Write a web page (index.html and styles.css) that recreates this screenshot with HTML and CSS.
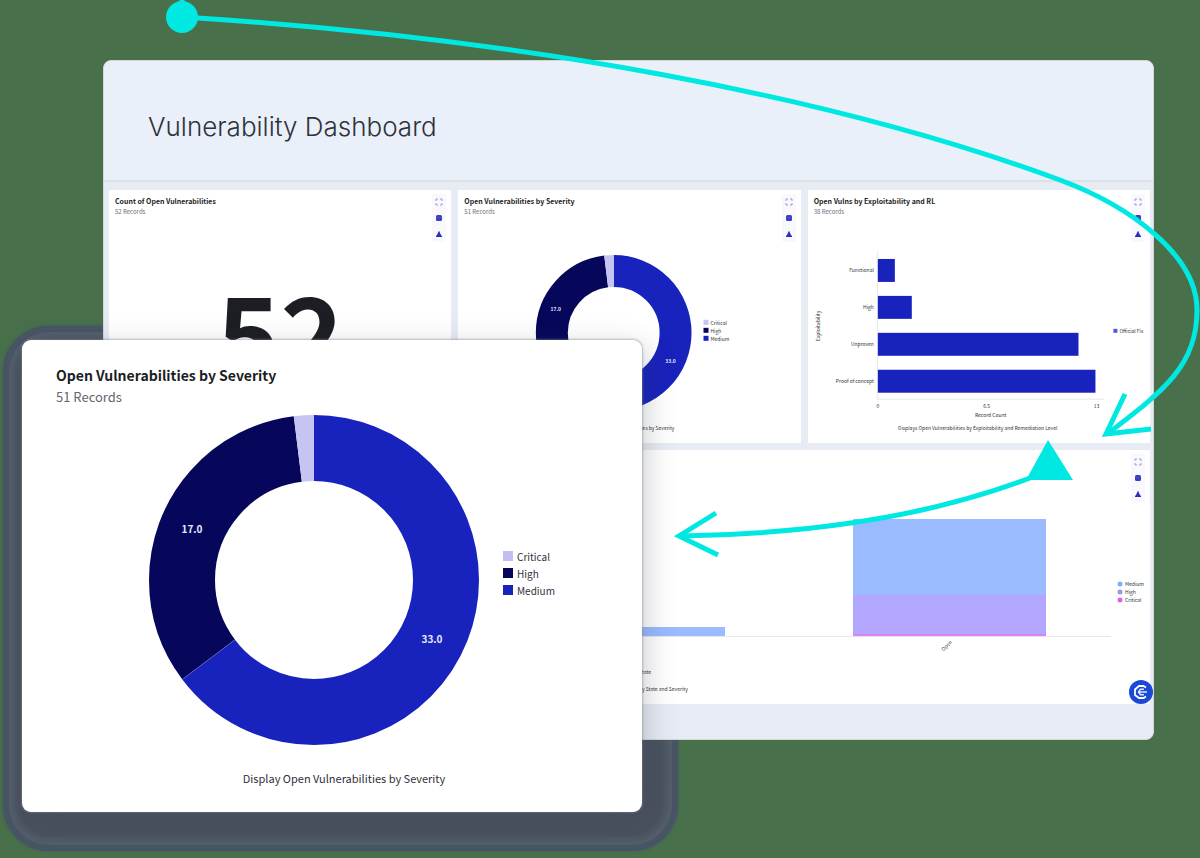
FILE: index.html
```html
<!DOCTYPE html>
<html lang="en">
<head>
    <meta charset="UTF-8">
    <meta name="viewport" content="width=device-width, initial-scale=1.0">
    <title>Vulnerability Dashboard</title>
    <link rel="stylesheet" href="styles.css">
</head>
<body>

<!-- Shared icons -->
<svg class="sprite" aria-hidden="true">
    <symbol id="icon-expand" viewBox="0 0 8 8">
        <path d="M1 3V1h2M5 1h2v2M7 5v2H5M3 7H1V5" fill="none" stroke="#9a9bdc" stroke-width="1"/>
    </symbol>
    <symbol id="icon-table" viewBox="0 0 8 8">
        <rect x="1" y="1" width="6" height="6" rx="1.5" fill="#3b3fc0"/>
        <path d="M1 3.3h6" stroke="#5d60cc" stroke-width=".5"/>
    </symbol>
    <symbol id="icon-alert" viewBox="0 0 8 8">
        <path d="M4 .8C5 2.2 5.3 4.6 7 6.2V7H1v-.8C2.700 4.600 3 2.200 4 .8z" fill="#2b2fb8"/>
    </symbol>
</svg>

<main class="scene">
    <div class="halo"></div>

    <!-- Dashboard -->
    <section class="dashboard">
        <header class="dashboard-header">
            <h1>Vulnerability Dashboard</h1>
        </header>

        <div class="cards">
            <article class="card">
                <div class="card-head">
                    <div>
                        <h2>Count of Open Vulnerabilities</h2>
                        <p>52 Records</p>
                    </div>
                    <div class="tools">
                        <button type="button" aria-label="Expand"><svg><use href="#icon-expand"/></svg></button>
                        <button type="button" aria-label="Table"><svg><use href="#icon-table"/></svg></button>
                        <button type="button" aria-label="Alerts"><svg><use href="#icon-alert"/></svg></button>
                    </div>
                </div>
                <div class="count">52</div>
            </article>

            <article class="card">
                <div class="card-head">
                    <div>
                        <h2>Open Vulnerabilities by Severity</h2>
                        <p>51 Records</p>
                    </div>
                    <div class="tools">
                        <button type="button" aria-label="Expand"><svg><use href="#icon-expand"/></svg></button>
                        <button type="button" aria-label="Table"><svg><use href="#icon-table"/></svg></button>
                        <button type="button" aria-label="Alerts"><svg><use href="#icon-alert"/></svg></button>
                    </div>
                </div>
                <svg class="chart" viewBox="0 0 343 201">
                    <g class="donut" transform="rotate(-90 156 91)" stroke-width="32">
                        <circle class="medium" cx="156" cy="91" r="62" pathLength="51" stroke-dasharray="33 18"/>
                        <circle class="high" cx="156" cy="91" r="62" pathLength="51" stroke-dasharray="17 34" stroke-dashoffset="-33"/>
                        <circle class="critical" cx="156" cy="91" r="62" pathLength="51" stroke-dasharray="1 50" stroke-dashoffset="-50"/>
                    </g>
                    <text class="value" x="98" y="69">17.0</text>
                    <text class="value" x="213" y="121">33.0</text>
                    <rect x="246" y="78" width="5" height="5" fill="#c6c4f2"/>
                    <rect x="246" y="86" width="5" height="5" fill="#06075b"/>
                    <rect x="246" y="94" width="5" height="5" fill="#1822bd"/>
                    <text x="253" y="83">Critical</text>
                    <text x="253" y="91">High</text>
                    <text x="253" y="99">Medium</text>
                    <text class="caption" x="171" y="188">Display Open Vulnerabilities by Severity</text>
                </svg>
            </article>

            <article class="card">
                <div class="card-head">
                    <div>
                        <h2>Open Vulns by Exploitability and RL</h2>
                        <p>38 Records</p>
                    </div>
                    <div class="tools">
                        <button type="button" aria-label="Expand"><svg><use href="#icon-expand"/></svg></button>
                        <button type="button" aria-label="Table"><svg><use href="#icon-table"/></svg></button>
                        <button type="button" aria-label="Alerts"><svg><use href="#icon-alert"/></svg></button>
                    </div>
                </div>
                <svg class="chart" viewBox="0 0 343 201">
                    <path class="axis" d="M69.500 10v148M69 157.500h228"/>
                    <g fill="#1822bd">
                        <rect x="70" y="17" width="17" height="23"/>
                        <rect x="70" y="54" width="34" height="23"/>
                        <rect x="70" y="91" width="201" height="23"/>
                        <rect x="70" y="128" width="218" height="23"/>
                    </g>
                    <g text-anchor="end">
                        <text x="66" y="30">Functional</text>
                        <text x="66" y="67">High</text>
                        <text x="66" y="104">Unproven</text>
                        <text x="66" y="141">Proof of concept</text>
                    </g>
                    <g text-anchor="middle">
                        <text x="70" y="166">0</text>
                        <text x="179" y="166">6.5</text>
                        <text x="289" y="166">13</text>
                        <text class="caption" x="183" y="175">Record Count</text>
                        <text class="caption" x="170" y="188">Displays Open Vulnerabilities by Exploitability and Remediation Level</text>
                        <text class="caption" transform="translate(12 84) rotate(-90)">Exploitability</text>
                    </g>
                    <rect x="306" y="87" width="4" height="4" fill="#4a5be0"/>
                    <text x="312" y="91">Official Fix</text>
                </svg>
            </article>

            <article class="card card-wide">
                <div class="card-head">
                    <div>
                        <h2>Vulnerabilities by State and Severity</h2>
                        <p>51 Records</p>
                    </div>
                    <div class="tools">
                        <button type="button" aria-label="Expand"><svg><use href="#icon-expand"/></svg></button>
                        <button type="button" aria-label="Table"><svg><use href="#icon-table"/></svg></button>
                        <button type="button" aria-label="Alerts"><svg><use href="#icon-alert"/></svg></button>
                    </div>
                </div>
                <svg class="chart" viewBox="0 0 1041 202">
                    <path class="axis" d="M70 134.500h932"/>
                    <rect x="423" y="125" width="193" height="9" fill="#9abbff"/>
                    <rect x="744" y="17" width="193" height="76" fill="#9abbff"/>
                    <rect x="744" y="93" width="193" height="39" fill="#b3a6ff"/>
                    <rect x="744" y="132" width="193" height="2" fill="#d884f6"/>
                    <text text-anchor="middle" transform="translate(839 145) rotate(-45)">Open</text>
                    <text class="caption" x="536" y="172">State</text>
                    <text class="caption" x="520" y="189">Displays Open Vulnerabilities by State and Severity</text>
                    <circle cx="1011" cy="82" r="2.500" fill="#7fb0f5"/>
                    <circle cx="1011" cy="90" r="2.500" fill="#9c95f0"/>
                    <circle cx="1011" cy="98" r="2.500" fill="#dc62ea"/>
                    <text x="1016" y="84">Medium</text>
                    <text x="1016" y="92">High</text>
                    <text x="1016" y="100">Critical</text>
                </svg>
            </article>
        </div>

        <button class="badge" type="button" aria-label="Assistant">
            <svg viewBox="0 0 24 24">
                <circle cx="12" cy="12" r="12" fill="#1c48d8"/>
                <path d="M17 7.500 14.500 6H10L6 9.500v5.500L10 18h4.500L17 16.500" fill="none" stroke="#fff" stroke-width="1.800"/>
                <path d="M15 9.200h-3.500L9.500 12l2 2.800H15M10 12h8" fill="none" stroke="#dfe6ff" stroke-width="1.600"/>
            </svg>
        </button>
    </section>

    <!-- Enlarged chart -->
    <section class="detail">
        <h2>Open Vulnerabilities by Severity</h2>
        <p>51 Records</p>
        <svg class="chart" viewBox="0 0 620 402">
            <g class="donut" transform="rotate(-90 292 170)" stroke-width="66">
                <circle class="medium" cx="292" cy="170" r="132" pathLength="51" stroke-dasharray="33 18"/>
                <circle class="high" cx="292" cy="170" r="132" pathLength="51" stroke-dasharray="17 34" stroke-dashoffset="-33"/>
                <circle class="critical" cx="292" cy="170" r="132" pathLength="51" stroke-dasharray="1 50" stroke-dashoffset="-50"/>
            </g>
            <path d="M160.300 269.400 213 229.700" stroke="#6a6cc4" stroke-width=".7"/>
            <text class="value" x="170" y="123">17.0</text>
            <text class="value" x="410" y="233">33.0</text>
            <rect x="481" y="141" width="10" height="10" fill="#c0bff0"/>
            <rect x="481" y="158" width="10" height="10" fill="#06075b"/>
            <rect x="481" y="175" width="10" height="10" fill="#1822bd"/>
            <text x="495" y="151">Critical</text>
            <text x="495" y="168">High</text>
            <text x="495" y="185">Medium</text>
            <text class="caption" x="322" y="373">Display Open Vulnerabilities by Severity</text>
        </svg>
    </section>

    <!-- Arrows -->
    <svg class="arrows" viewBox="0 0 1200 858" aria-hidden="true">
        <circle cx="182" cy="17" r="16" fill="#00e8e2"/>
        <path d="M1048 440l25 40h-47z" fill="#00e8e2"/>
        <g fill="none" stroke="#00e8e2" stroke-width="5">
            <path d="M182 0v17C520 38 830 95 1060 180C1130 206 1197 255 1197 310S1165 390 1107 434"/>
            <path d="M1125 394l-19 40 45-5"/>
            <path d="M1030 478C920 520 800 534 682 536"/>
            <path d="M716 513l-37 23 39 19"/>
        </g>
    </svg>
</main>

</body>
</html>
```

FILE: styles.css
```css
/* General Styling */
* {
    box-sizing: border-box;
}

body {
    margin: 0;
    background-color: #48704a;
    color: #1c1e24;
    font-family: "Noto Sans CJK SC", "Noto Sans", sans-serif;
}

h1, h2, p {
    margin: 0;
}

button {
    border: none;
    padding: 0;
    background: none;
    cursor: pointer;
}

.sprite {
    display: none;
}

.scene {
    position: relative;
    overflow: hidden;
    padding: 60px 46px 118px 103px;
}

/* Dashboard */
.dashboard {
    position: relative;
    background: #e7ebf4;
    border: 1px solid #d3d7da;
    border-radius: 8px;
    overflow: hidden;
}

.dashboard-header {
    display: flex;
    align-items: center;
    height: 121px;
    padding: 12px 44px 0;
    background: #eaf0fa;
    border-bottom: 2px solid #dde1e7;
}

.dashboard-header h1 {
    font-family: Inter, sans-serif;
    font-size: 26px;
    font-weight: 350;
    color: #30323a;
}

.cards {
    display: grid;
    grid-template-columns: repeat(3, 1fr);
    gap: 7px;
    padding: 8px 3px 35px 5px;
}

.card {
    background: #fff;
}

.card-wide {
    grid-column: 1 / -1;
}

.card-head {
    display: flex;
    justify-content: space-between;
    padding: 4px 5px 0 6px;
}

.card-head h2 {
    padding-top: 2px;
    font-size: 7px;
    line-height: 11px;
}

.card-head p {
    font-size: 6px;
    line-height: 9px;
    color: #6a6d75;
}

.tools {
    display: flex;
    flex-direction: column;
    width: 14px;
    border-radius: 2px;
    background: #f8f8fd;
}

.tools button {
    display: flex;
    align-items: center;
    justify-content: center;
    height: 16px;
}

.tools svg {
    width: 8px;
    height: 8px;
}

.count {
    height: 201px;
    line-height: 174px;
    font-size: 108px;
    font-weight: 700;
    text-align: center;
}

/* Charts */
.chart {
    display: block;
    width: 100%;
    font-size: 5px;
    fill: #30323a;
}

.chart .caption {
    font-size: 5px;
    text-anchor: middle;
}

.chart .value {
    fill: #e6e7fb;
    font-weight: 700;
    text-anchor: middle;
}

.axis {
    fill: none;
    stroke: #e6e7ea;
}

.donut {
    fill: none;
}

.medium {
    stroke: #1822bd;
}

.high {
    stroke: #06075b;
}

.critical {
    stroke: #c6c4f2;
}

.badge {
    position: absolute;
    right: 0;
    bottom: 35px;
    width: 24px;
    height: 24px;
}

.badge svg {
    display: block;
}

/* Enlarged chart */
.halo {
    position: absolute;
    left: 3px;
    top: 326px;
    width: 675px;
    height: 525px;
    border-radius: 46px;
    background: #4a5260;
    box-shadow: inset 0 0 0 6px #485565, inset 0 0 6px 12px #53606c, 0 0 3px #485565;
}

.detail {
    position: absolute;
    left: 22px;
    top: 340px;
    width: 620px;
    padding-top: 24px;
    background: #fff;
    border-radius: 9px;
    box-shadow: 0 0 2px 1px rgba(130, 135, 145, 0.5), 4px 8px 30px rgba(50, 54, 68, 0.25);
}

.detail h2 {
    padding-left: 34px;
    font-size: 14px;
    line-height: 23px;
}

.detail p {
    padding-left: 34px;
    margin-bottom: 3px;
    font-size: 13px;
    line-height: 20px;
    color: #63666e;
}

.detail .chart {
    font-size: 10px;
}

.detail .chart .caption {
    font-size: 11px;
}

.arrows {
    position: absolute;
    left: 0;
    top: 0;
    width: 1200px;
    pointer-events: none;
}
```
